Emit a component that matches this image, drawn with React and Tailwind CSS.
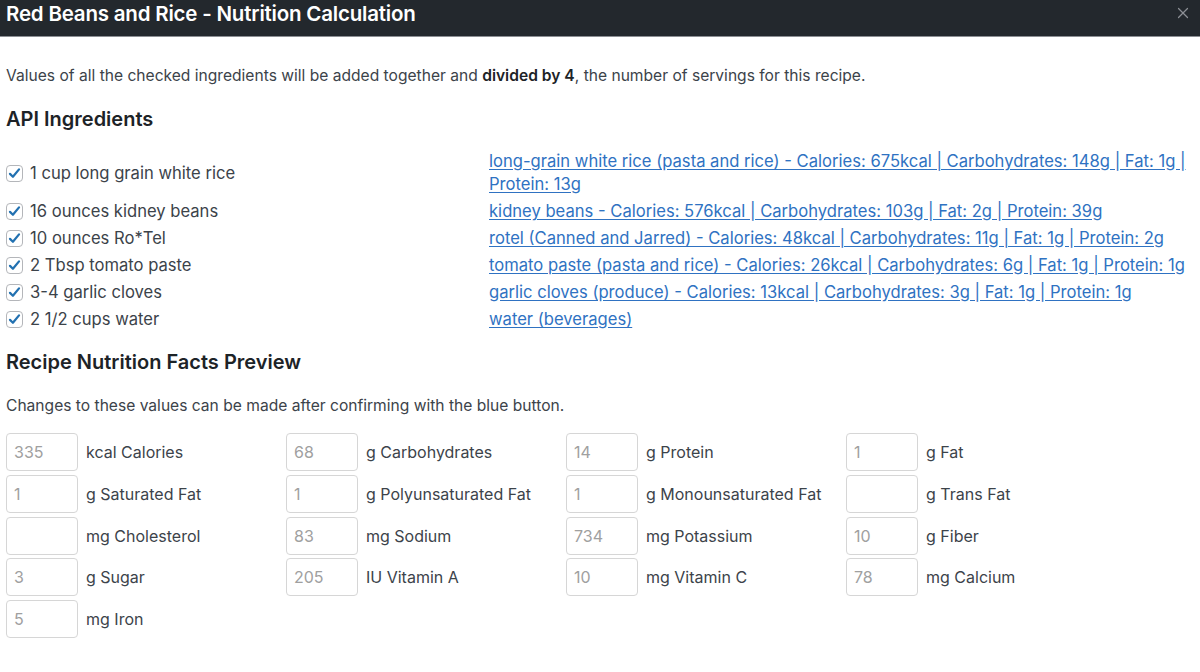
import { X } from "lucide-react";

const ingredients = [
  {
    name: "1 cup long grain white rice",
    match:
      "long-grain white rice (pasta and rice) - Calories: 675kcal | Carbohydrates: 148g | Fat: 1g | Protein: 13g",
  },
  {
    name: "16 ounces kidney beans",
    match: "kidney beans - Calories: 576kcal | Carbohydrates: 103g | Fat: 2g | Protein: 39g",
  },
  {
    name: "10 ounces Ro*Tel",
    match: "rotel (Canned and Jarred) - Calories: 48kcal | Carbohydrates: 11g | Fat: 1g | Protein: 2g",
  },
  {
    name: "2 Tbsp tomato paste",
    match: "tomato paste (pasta and rice) - Calories: 26kcal | Carbohydrates: 6g | Fat: 1g | Protein: 1g",
  },
  {
    name: "3-4 garlic cloves",
    match: "garlic cloves (produce) - Calories: 13kcal | Carbohydrates: 3g | Fat: 1g | Protein: 1g",
  },
  { name: "2 1/2 cups water", match: "water (beverages)" },
];

const facts = [
  ["335", "kcal Calories"],
  ["68", "g Carbohydrates"],
  ["14", "g Protein"],
  ["1", "g Fat"],
  ["1", "g Saturated Fat"],
  ["1", "g Polyunsaturated Fat"],
  ["1", "g Monounsaturated Fat"],
  ["", "g Trans Fat"],
  ["", "mg Cholesterol"],
  ["83", "mg Sodium"],
  ["734", "mg Potassium"],
  ["10", "g Fiber"],
  ["3", "g Sugar"],
  ["205", "IU Vitamin A"],
  ["10", "mg Vitamin C"],
  ["78", "mg Calcium"],
  ["5", "mg Iron"],
];

function Checkbox() {
  return (
    <span className="flex h-[17px] w-[17px] shrink-0 items-center justify-center rounded-[4px] border border-[#b4b6ba] bg-white">
      <svg viewBox="0 0 16 16" className="h-[15px] w-[15px]">
        <path d="M3.2 8.4 6.3 11.4 12.8 3.6" fill="none" stroke="#2271b1" strokeWidth="2.4" strokeLinecap="round" strokeLinejoin="round" />
      </svg>
    </span>
  );
}

export default function App() {
  return (
    <div className="h-[672px] w-[1200px] overflow-hidden bg-white font-['Inter',sans-serif] text-[#3c434a]">
      <header className="flex h-[37px] items-start justify-between border-b border-[#8c8f94] bg-[#23282d] pl-[6px] pr-[8px]">
        <h1 className="mt-[1px] text-[20.5px] font-semibold leading-[26px] tracking-[-0.2px] text-white">Red Beans and Rice - Nutrition Calculation</h1>
        <X className="mt-[4px] h-[18px] w-[18px] text-[#8c8f94]" strokeWidth={1.6} />
      </header>

      <main className="px-[6px]">
        <p className="mt-[28px] text-[15.6px] leading-[22px]">
          Values of all the checked ingredients will be added together and <strong className="font-semibold text-[#1d2327]">divided by 4</strong>, the number of servings for this recipe.
        </p>

        <h2 className="mt-[18px] text-[20px] font-semibold leading-[28px] text-[#1d2327]">API Ingredients</h2>

        <div className="mt-[15px] grid grid-cols-[483px_1fr]">
          {ingredients.map((ing) => (
            <div key={ing.name} className="contents">
              <div className="flex items-center gap-[7px] py-[2px] text-[16.6px] leading-[23px]">
                <Checkbox />
                <span>{ing.name}</span>
              </div>
              <div className="py-[2px] text-[16.6px] leading-[23px]">
                <a href="#" className="text-[#2f72c2] underline underline-offset-2">
                  {ing.match}
                </a>
              </div>
            </div>
          ))}
        </div>

        <h2 className="mt-[15px] text-[20px] font-semibold leading-[28px] text-[#1d2327]">Recipe Nutrition Facts Preview</h2>

        <p className="mt-[19px] text-[15.6px] leading-[22px]">Changes to these values can be made after confirming with the blue button.</p>

        <div className="mt-[16px] grid grid-cols-[280px_280px_280px_280px] gap-y-[3.75px]">
          {facts.map(([value, label]) => (
            <div key={label} className="flex items-center gap-[8px]">
              <input
                readOnly
                value={value}
                className="h-[38px] w-[72px] rounded-[4px] border border-[#d6d6d6] px-[7px] text-[16px] text-[#a0a0a0] outline-none"
              />
              <span className="text-[16px]">{label}</span>
            </div>
          ))}
        </div>
      </main>
    </div>
  );
}
